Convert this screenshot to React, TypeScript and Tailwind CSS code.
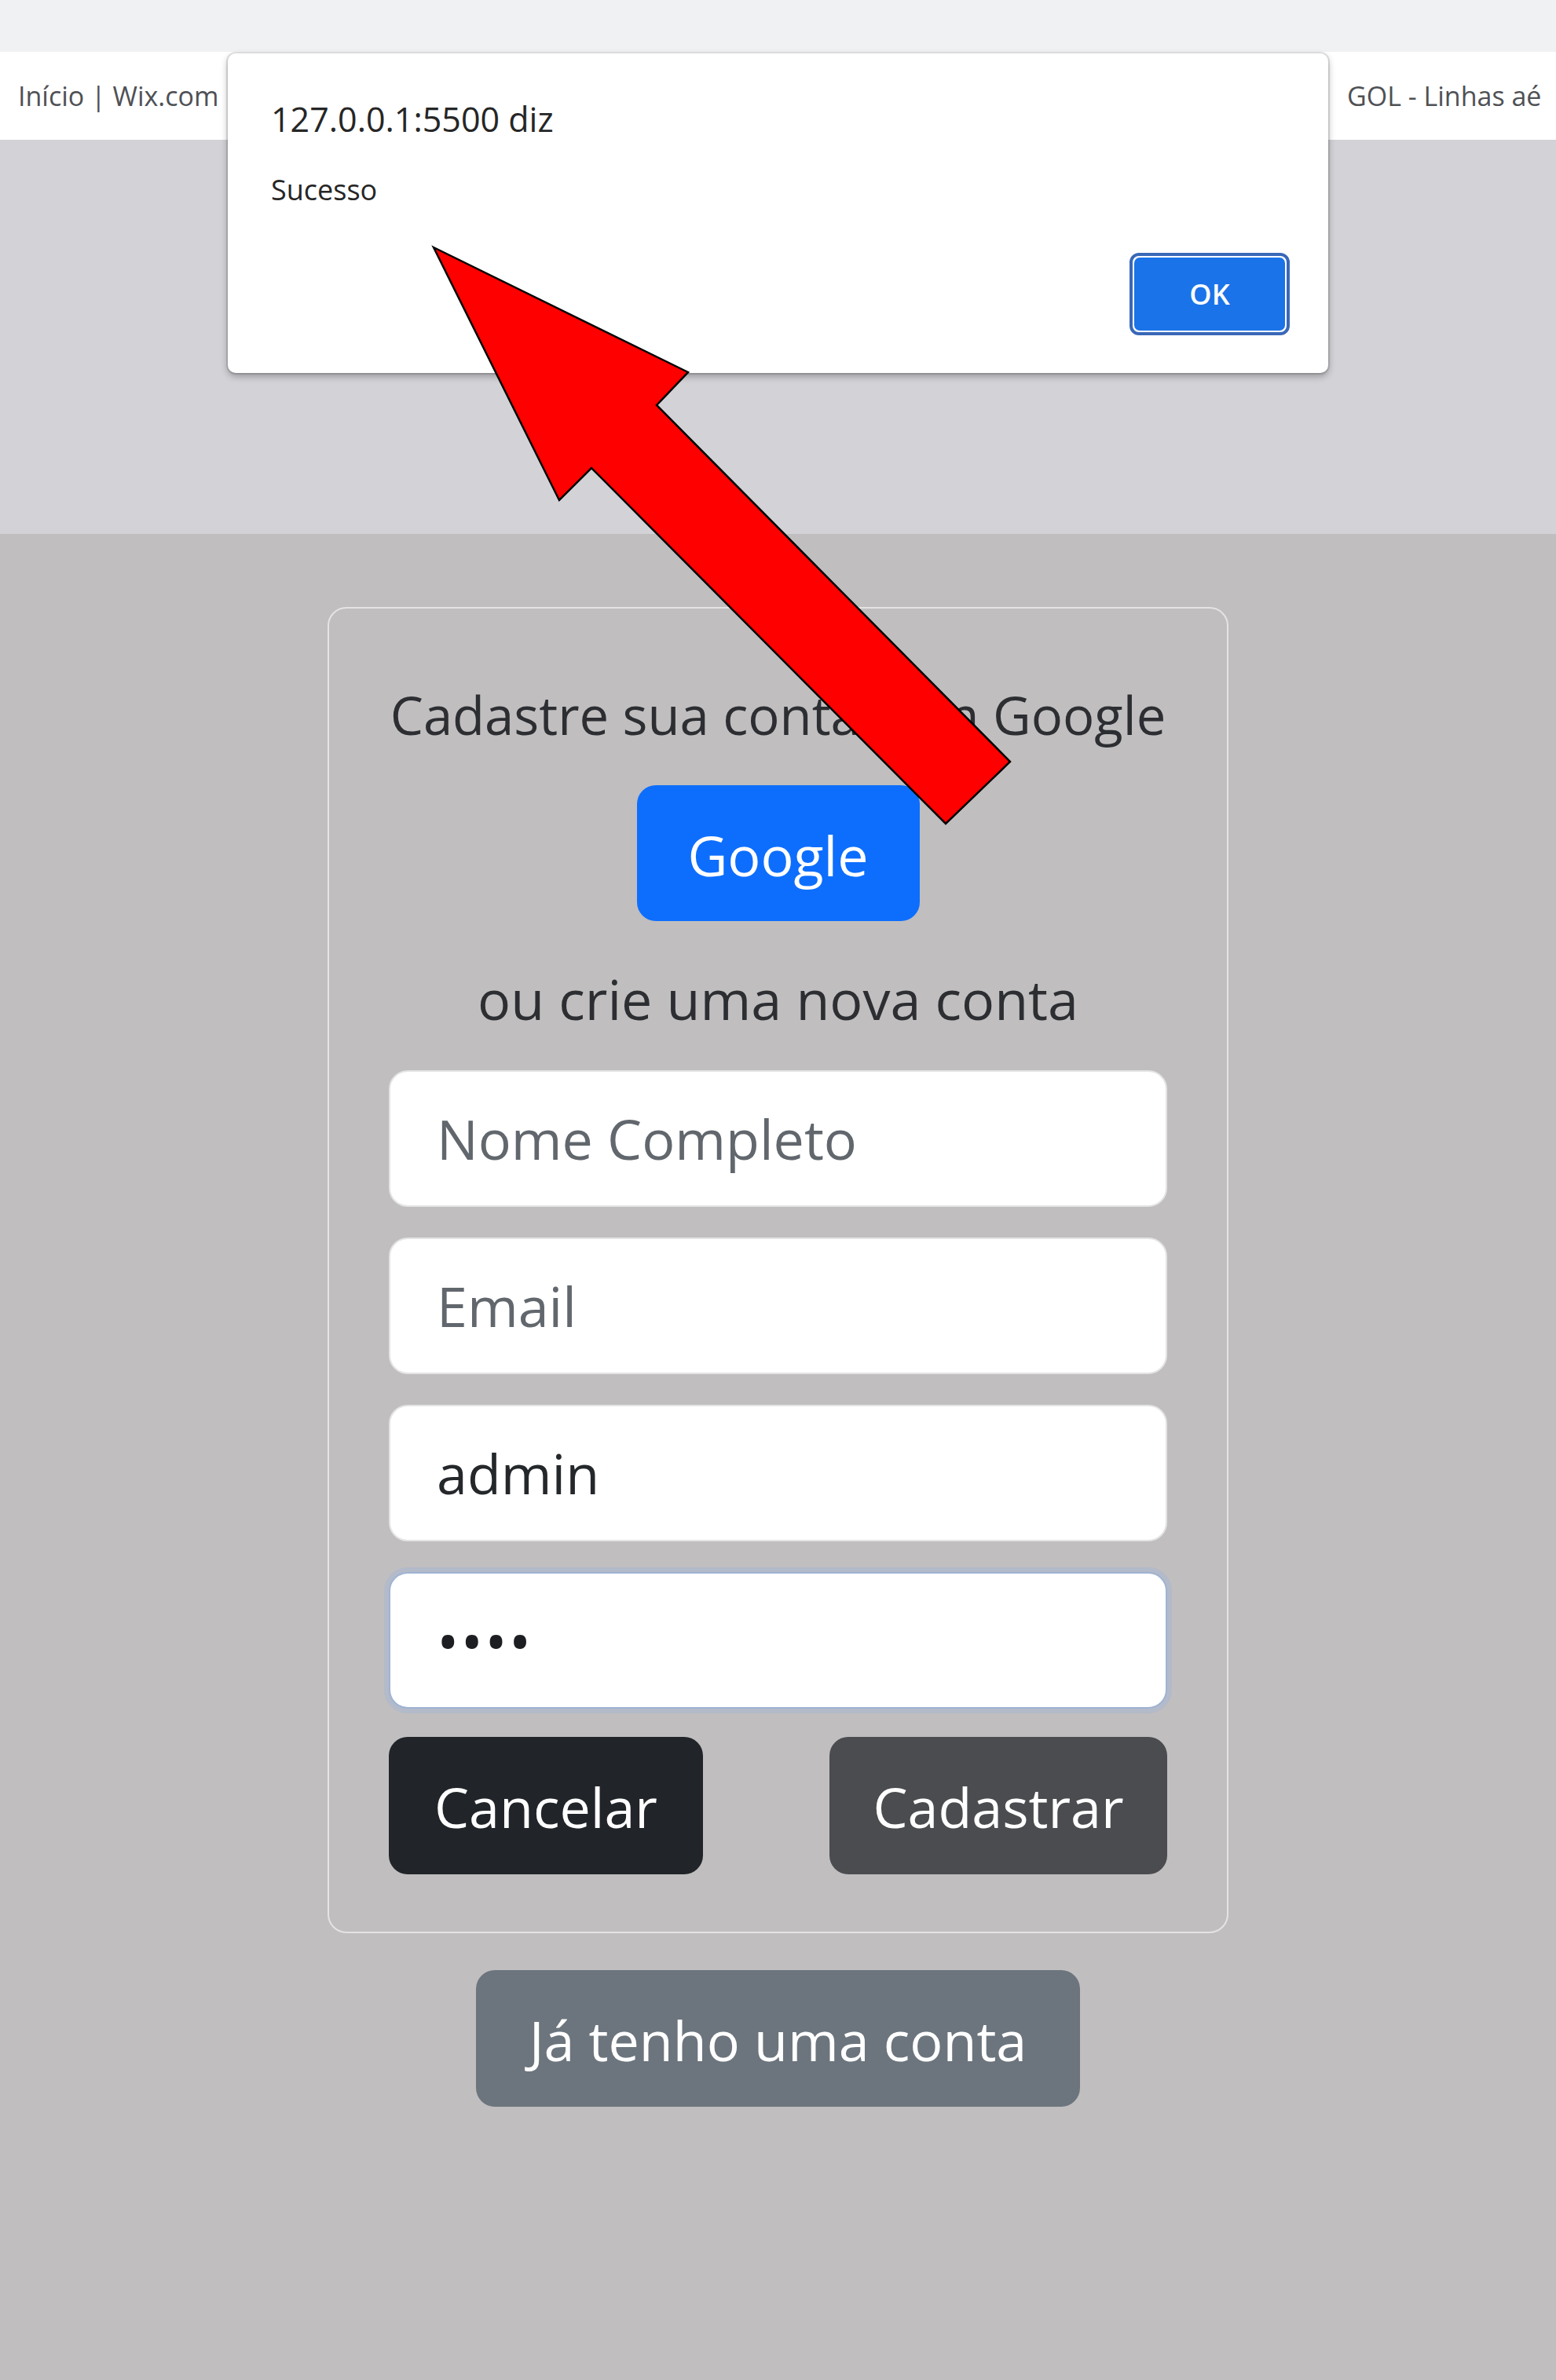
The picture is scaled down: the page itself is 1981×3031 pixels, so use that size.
export default function App() {
    return (
        <div className="relative min-h-[3031px] w-full overflow-hidden bg-[#c0bebf] font-['Open_Sans',sans-serif]">
            {/* browser chrome */}
            <div className="h-[66px] bg-[#f0f1f3]" />
            <div className="flex h-[112px] items-center justify-between whitespace-nowrap bg-white pl-[23px] text-[34px] text-[#4f5155]">
                <span>Início | Wix.com</span>
                <span className="w-[266px] overflow-hidden">GOL - Linhas aé</span>
            </div>

            {/* page */}
            <div className="h-[502px] bg-[#d2d2d7]" />
            <main className="flex flex-col items-center pt-[93px]">
                <div className="w-[1147px] rounded-[24px] border-2 border-[#e5e3e4] px-[76px] pb-[73px] pt-[90px]">
                    <h1 className="-mx-[20px] whitespace-nowrap text-center text-[67px] leading-[90px] text-[#2c2e32]">
                        Cadastre sua conta com Google
                    </h1>
                    <div className="mt-[45px] flex justify-center">
                        <button className="h-[173px] w-[360px] rounded-[24px] bg-[#0d6efd] pt-[6px] text-[70px] text-white">
                            Google
                        </button>
                    </div>
                    <p className="mt-[54px] text-center text-[70px] leading-[90px] text-[#2c2e32]">
                        ou crie uma nova conta
                    </p>
                    <form className="mt-[46px] flex flex-col gap-[39px]">
                        <input
                            type="text"
                            placeholder="Nome Completo"
                            className="h-[174px] w-full rounded-[24px] border-2 border-[#e4e4e4] bg-white pl-[59px] text-[70px] text-[#25282b] outline-none placeholder:text-[#61676d]"
                        />
                        <input
                            type="email"
                            placeholder="Email"
                            className="h-[174px] w-full rounded-[24px] border-2 border-[#e4e4e4] bg-white pl-[59px] text-[70px] text-[#25282b] outline-none placeholder:text-[#61676d]"
                        />
                        <input
                            type="text"
                            defaultValue="admin"
                            className="h-[174px] w-full rounded-[24px] border-2 border-[#e4e4e4] bg-white pl-[59px] text-[70px] text-[#25282b] outline-none"
                        />
                        <input
                            type="password"
                            defaultValue="1234"
                            className="h-[174px] w-full rounded-[24px] border-2 border-[#9fb3d3] bg-white pl-[59px] text-[76px] tracking-[2px] text-[#1c1e21] shadow-[0_0_0_6px_rgba(168,182,210,0.55)] outline-none"
                        />
                        <div className="-mt-[3px] flex justify-between">
                            <button
                                type="button"
                                className="h-[175px] w-[400px] rounded-[24px] bg-[#212529] pt-[4px] text-[70px] text-white"
                            >
                                Cancelar
                            </button>
                            <button
                                type="submit"
                                className="h-[175px] w-[430px] rounded-[24px] bg-[#4a4c4f] pt-[4px] text-[70px] text-white"
                            >
                                Cadastrar
                            </button>
                        </div>
                    </form>
                </div>
                <button className="mt-[47px] h-[174px] w-[769px] rounded-[24px] bg-[#6c757d] pt-[4px] text-[70px] text-white">
                    Já tenho uma conta
                </button>
            </main>

            {/* alert dialog */}
            <div className="absolute left-[290px] top-[68px] h-[407px] w-[1401px] rounded-[10px] bg-white pl-[55px] pr-[49px] pt-[55px] shadow-[0_0_0_2px_rgba(0,0,0,0.1),0_4px_10px_rgba(0,0,0,0.3)]">
                <div className="text-[43px] leading-[58px] text-[#262626]">
                    127.0.0.1:5500 diz
                </div>
                <div className="mt-[36px] text-[36px] leading-[49px] text-[#262626]">
                    Sucesso
                </div>
                <div className="mt-[56px] flex justify-end">
                    <div className="h-[105px] w-[204px] rounded-[12px] border-[4px] border-[#3a68b8] bg-white p-[2px]">
                        <div className="flex h-full w-full items-center justify-center rounded-[7px] bg-[#1a73e8] text-[36px] font-semibold text-white">
                            OK
                        </div>
                    </div>
                </div>
            </div>

            {/* red arrow annotation */}
            <svg
                className="pointer-events-none absolute left-0 top-0"
                width="1981"
                height="1100"
                viewBox="0 0 1981 1100"
            >
                <polygon
                    points="552,315 876,474 836,516 1286,970 1204,1049 753,596 712,637"
                    fill="#ff0000"
                    stroke="#000000"
                    strokeWidth="2.5"
                    strokeLinejoin="miter"
                />
            </svg>
        </div>
    );
}
